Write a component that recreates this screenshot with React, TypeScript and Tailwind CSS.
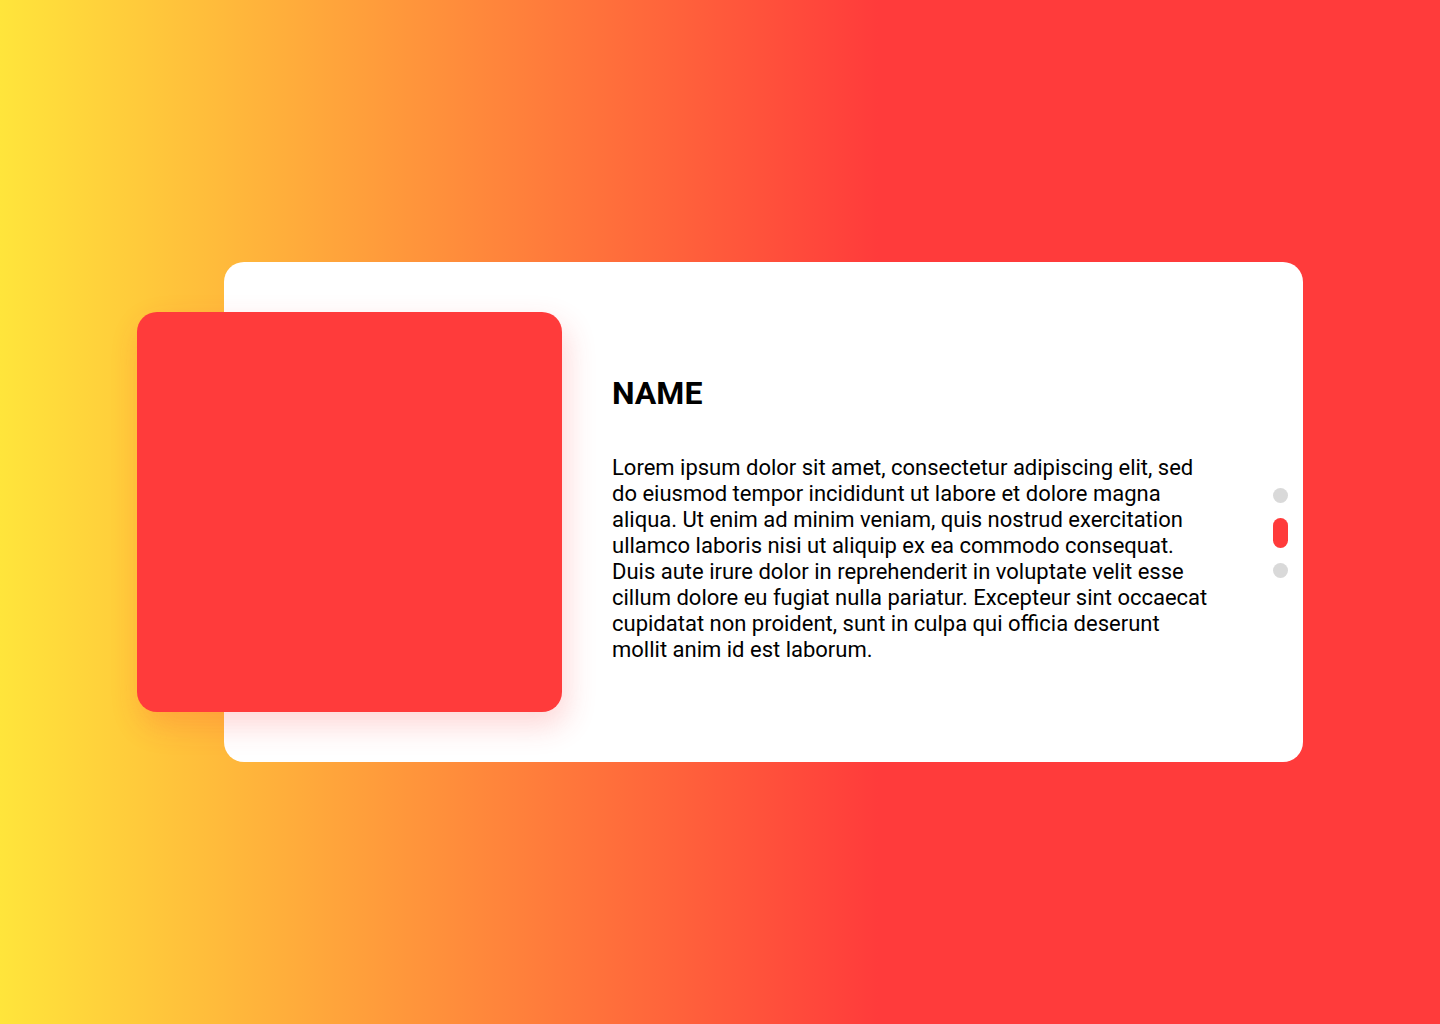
export default function App() {
  return (
    <div className="min-h-screen w-full flex items-center justify-center bg-[linear-gradient(90deg,#ffe53b_0%,#ff3b3b_61%,#ff3b3b_100%)] font-['Roboto',sans-serif]">
      <div className="ml-[87px] flex items-start w-[1079px] h-[500px] bg-white rounded-[20px]">
        <div className="ml-[-87px] mt-[50px] w-[425px] h-[400px] shrink-0 rounded-[20px] bg-[#ff3b3b] shadow-[4px_13px_30px_1px_rgba(252,56,56,0.2)]" />
        <div className="ml-[50px] mt-[112px] w-[604px] text-black">
          <h1 className="text-[32px] leading-[38px] font-bold">NAME</h1>
          <p className="mt-[43px] text-[22px] leading-[26px]">
            Lorem ipsum dolor sit amet, consectetur adipiscing elit, sed do eiusmod tempor incididunt ut labore et dolore
            magna aliqua. Ut enim ad minim veniam, quis nostrud exercitation ullamco laboris nisi ut aliquip ex ea commodo
            consequat. Duis aute irure dolor in reprehenderit in voluptate velit esse cillum dolore eu fugiat nulla
            pariatur. Excepteur sint occaecat cupidatat non proident, sunt in culpa qui officia deserunt mollit anim id est
            laborum.
          </p>
        </div>
        <div className="ml-auto mr-[15px] mt-[226px] flex flex-col items-center gap-[15px]">
          <span className="block w-[15px] h-[15px] rounded-full bg-[#d9d9d9]" />
          <span className="block w-[15px] h-[30px] rounded-full bg-[#ff3b3b]" />
          <span className="block w-[15px] h-[15px] rounded-full bg-[#d9d9d9]" />
        </div>
      </div>
    </div>
  );
}
